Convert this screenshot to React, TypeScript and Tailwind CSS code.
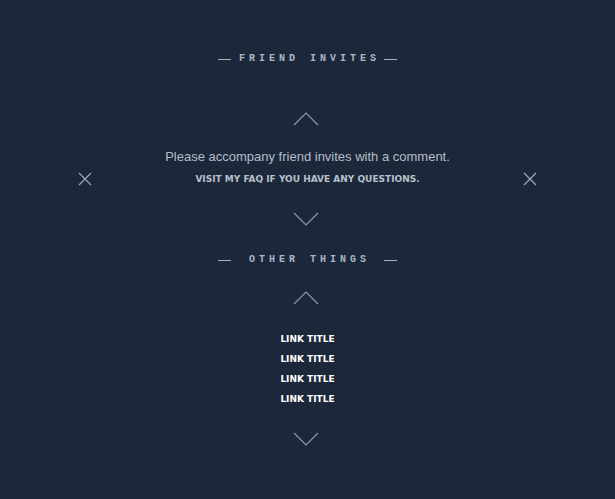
import React from 'react'

const ChevronUp = () => (
  <svg width="26" height="14" viewBox="0 0 26 14" fill="none" className="block">
    <path d="M1 13 L13 1 L25 13" stroke="#8d9db0" strokeWidth="1.1" />
  </svg>
)

const ChevronDown = () => (
  <svg width="26" height="14" viewBox="0 0 26 14" fill="none" className="block">
    <path d="M1 1 L13 13 L25 1" stroke="#8d9db0" strokeWidth="1.1" />
  </svg>
)

const CloseIcon = () => (
  <svg width="14" height="14" viewBox="0 0 14 14" fill="none" className="block">
    <path d="M1 1 L13 13 M13 1 L1 13" stroke="#9aaabb" strokeWidth="1.2" />
  </svg>
)

// section title with dashes either side
const SectionTitle = ({ label }: { label: string }) => (
  <div className="flex w-[180px] items-center justify-between">
    <span className="block h-px w-[13px] bg-[#a3b2c3]" />
    <span className="font-['Liberation_Mono',monospace] text-[10px] leading-[12px] font-bold tracking-[4px] text-[#a8b7c7] [word-spacing:1px] mr-[-4px]">
      {label}
    </span>
    <span className="block h-px w-[13px] bg-[#a3b2c3]" />
  </div>
)

export default function App() {
  const links = ['LINK TITLE', 'LINK TITLE', 'LINK TITLE', 'LINK TITLE']

  return (
    <div className="min-h-[499px] w-full bg-[#1c2839] flex flex-col items-center pt-[53px] pb-[40px]">
      {/* FRIEND INVITES */}
      <SectionTitle label="FRIEND INVITES" />

      <div className="mt-[47px] ml-[-3px]">
        <ChevronUp />
      </div>

      <div className="mt-[22px] flex w-full items-end justify-between px-[78px]">
        <div>
          <CloseIcon />
        </div>
        <div className="flex flex-col items-center">
          <p className="font-['Liberation_Sans',Arial,sans-serif] text-[13px] leading-[18px] text-[#b3bdc9]">
            Please accompany friend invites with a comment.
          </p>
          <p className="mt-[6px] font-['DejaVu_Sans',Verdana,sans-serif] text-[9px] leading-[14px] font-bold text-[#b6c0cc]">
            VISIT MY FAQ IF YOU HAVE ANY QUESTIONS.
          </p>
        </div>
        <div>
          <CloseIcon />
        </div>
      </div>

      <div className="mt-[26px] ml-[-3px]">
        <ChevronDown />
      </div>

      {/* OTHER THINGS */}
      <div className="mt-[28px]">
        <SectionTitle label="OTHER THINGS" />
      </div>

      <div className="mt-[25px] ml-[-3px]">
        <ChevronUp />
      </div>

      <ul className="mt-[24px] flex flex-col items-center">
        {links.map((l, i) => (
          <li key={i}>
            <a className="block font-['DejaVu_Sans',Verdana,sans-serif] text-[9px] leading-[20px] font-bold text-white">
              {l}
            </a>
          </li>
        ))}
      </ul>

      <div className="mt-[23px] ml-[-3px]">
        <ChevronDown />
      </div>
    </div>
  )
}
